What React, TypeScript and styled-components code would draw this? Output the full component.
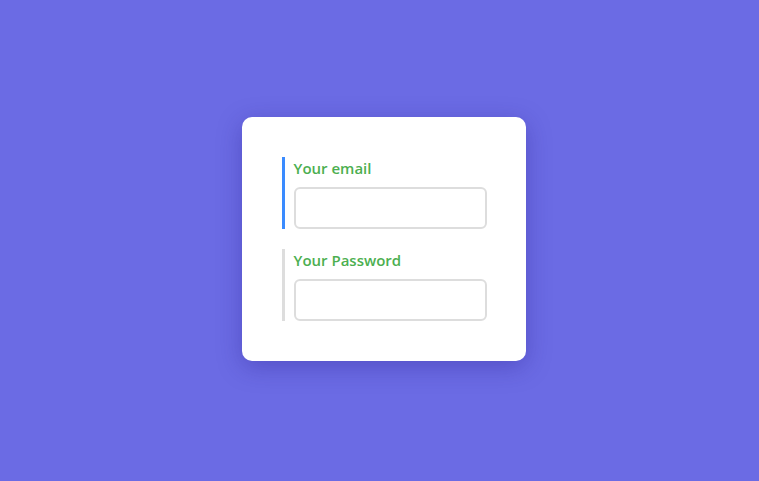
import React from 'react';
import styled, { createGlobalStyle } from 'styled-components';

const GlobalStyle = createGlobalStyle`
  html, body {
    margin: 0;
    padding: 0;
    height: 100%;
  }
  body {
    background: #6b6be4;
    font-family: 'Open Sans', 'Noto Sans', sans-serif;
  }
  #root {
    height: 100%;
  }
`;

const Page = styled.div`
  box-sizing: border-box;
  height: 100vh;
  padding: 0 0 3px 8px;
  display: flex;
  align-items: center;
  justify-content: center;
`;

const Card = styled.form`
  width: 204px;
  padding: 40px;
  background: #fff;
  border-radius: 10px;
  box-shadow: 0 6px 24px rgba(40, 30, 140, 0.35);
  display: flex;
  flex-direction: column;
  gap: 20px;
`;

const Field = styled.div<{ $active?: boolean }>`
  border-left: 3px solid ${(p) => (p.$active ? '#3a8bff' : '#dddddd')};
  padding-left: 9px;
  display: flex;
  flex-direction: column;
`;

const Label = styled.label`
  display: block;
  color: #4caf50;
  font-size: 15px;
  font-weight: 600;
  line-height: 22px;
  margin-bottom: 8px;
`;

const Input = styled.input`
  box-sizing: border-box;
  width: 193px;
  height: 42px;
  border: 2px solid #dddddd;
  border-radius: 6px;
  padding: 0 10px;
  font-size: 15px;
  font-family: inherit;
  background: #fff;
  &:focus {
    outline: none;
  }
`;

export default function App() {
  return (
    <>
      <GlobalStyle />
      <Page>
        <Card onSubmit={(e) => e.preventDefault()}>
          <Field $active>
            <Label htmlFor="email">Your email</Label>
            <Input id="email" type="email" />
          </Field>
          <Field>
            <Label htmlFor="password">Your Password</Label>
            <Input id="password" type="password" />
          </Field>
        </Card>
      </Page>
    </>
  );
}
